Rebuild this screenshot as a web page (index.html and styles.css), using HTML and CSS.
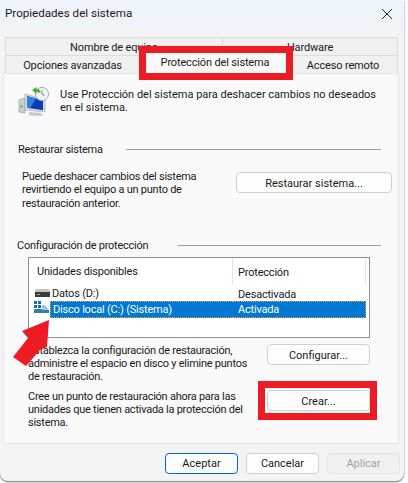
FILE: index.html
```html
<!DOCTYPE html>
<html lang="es">
<head>
  <meta charset="UTF-8" />
  <title>Propiedades del sistema</title>
  <link rel="stylesheet" href="styles.css">
</head>
<body>
  <div class="ventana">
    <div class="titulo">
      <span>Propiedades del sistema</span>
      <svg class="cerrar" width="10" height="10" viewBox="0 0 10 10"><path d="M0 0L10 10M10 0L0 10" stroke="#222" fill="none"/></svg>
    </div>

    <!-- Pestañas -->
    <div class="pestanas">
      <div class="fila">
        <div class="tab tab-equipo">Nombre de equipo</div>
        <div class="tab tab-hardware">Hardware</div>
      </div>
      <div class="fila">
        <div class="tab tab-opciones">Opciones avanzadas</div>
        <div class="tab tab-activa">Protección del sistema</div>
        <div class="tab tab-remoto">Acceso remoto</div>
      </div>
    </div>

    <div class="panel">
      <div class="intro">
        <svg class="icono-sistema" width="32" height="32" viewBox="0 0 32 32">
          <path d="M1 14l6-2v15l-6-1z" fill="#c9ced2" stroke="#8f979c" stroke-width=".6"/>
          <rect x="2.5" y="19" width="2" height="3" fill="#6fbf3a"/>
          <path d="M7 8l20 5v13L7 24z" fill="#d8dde2" stroke="#9aa3a9" stroke-width=".6"/>
          <path d="M9 10l16 4.2v10L9 21.8z" fill="#0a3cb4"/>
          <path d="M9 10l9 2.4-6 10L9 21.8z" fill="#2f7fe0"/>
          <path d="M11 26l12 1 2 3-14-.5z" fill="#c5cacf"/>
          <circle cx="24" cy="8" r="6.6" fill="#eef2f6" stroke="#a4adb5"/>
          <path d="M24 4.5V8l2.5 1.5" stroke="#6d7a86" fill="none"/>
          <path d="M14 4l4.500-3v2c3 0 4 1.500 4 3l-2.500 1c0-1-.5-1.500-1.500-1.500V8z" fill="#4aa82e"/>
        </svg>
        <p>Use Protección del sistema para deshacer cambios no deseados<br>en el sistema.</p>
      </div>

      <div class="cabecera cabecera-restaurar"><span>Restaurar sistema</span><i></i></div>
      <div class="bloque bloque-restaurar">
        <p>Puede deshacer cambios del sistema<br>revirtiendo el equipo a un punto de<br>restauración anterior.</p>
        <button class="btn btn-restaurar">Restaurar sistema...</button>
      </div>

      <div class="cabecera cabecera-config"><span>Configuración de protección</span><i></i></div>
      <div class="lista">
        <div class="lista-head">
          <div class="col-unidad">Unidades disponibles</div>
          <div class="col-prot">Protección</div>
        </div>
        <div class="lista-fila">
          <div class="col-unidad">
            <svg class="icono-disco" width="15" height="8" viewBox="0 0 15 8">
              <path d="M2 0h11l2 3v5H0V3z" fill="#3c3c3c"/>
              <path d="M2 0h11l2 3H0z" fill="#c4c4c4"/>
              <rect x="2" y="5" width="3" height="1" fill="#5fd14a"/>
            </svg>
            <span class="nombre">Datos (D:)</span>
          </div>
          <div class="col-prot">Desactivada</div>
        </div>
        <div class="lista-fila">
          <div class="col-unidad">
            <svg class="icono-disco-c" width="15" height="12" viewBox="0 0 15 12">
              <path d="M0 0h3v3H0zM4 0h3v3H4zM0 4h3v3H0zM4 4h3v3H4z" fill="#0a6fd0"/>
              <path d="M1 8h10l4 1v3H0V9z" fill="#2d7ea8"/>
              <path d="M8 4h3l4 5H8z" fill="#9cc6dd"/>
            </svg>
            <span class="nombre sel-nombre">Disco local (C:) (Sistema)</span>
          </div>
          <div class="col-prot sel-prot">Activada</div>
        </div>
      </div>

      <div class="bloque bloque-config">
        <p>Establezca la configuración de restauración,<br>administre el espacio en disco y elimine puntos<br>de restauración.</p>
        <button class="btn btn-corto">Configurar...</button>
      </div>
      <div class="bloque bloque-crear">
        <p>Cree un punto de restauración ahora para las<br>unidades que tienen activada la protección del<br>sistema.</p>
        <button class="btn btn-corto">Crear...</button>
      </div>
    </div>

    <div class="pie">
      <button class="btn btn-pie btn-aceptar">Aceptar</button>
      <button class="btn btn-pie">Cancelar</button>
      <button class="btn btn-pie btn-off">Aplicar</button>
    </div>
  </div>

  <!-- Marcas rojas sobre la captura -->
  <div class="marca marca-tab"></div>
  <div class="marca marca-crear"></div>
  <svg class="flecha" width="40" height="50" viewBox="0 0 40 50"><polygon points="39,0 12,11 18,18 3,37 16,46 30,30 37,27" fill="#ed1c24"/></svg>
</body>
</html>
```

FILE: styles.css
```css
* {
  box-sizing: border-box;
}
body {
  margin: 0;
  width: 408px;
  height: 483px;
  overflow: hidden;
  position: relative;
  background: #fff;
  font-family: Roboto, sans-serif;
  font-size: 11px;
  line-height: 13.33px;
  color: #1a1a1a;
}
p {
  margin: 0;
  white-space: nowrap;
}
.ventana {
  width: 404px;
  height: 481px;
  background: #f3f3f3;
  border-radius: 0 0 8px 8px;
  box-shadow: 0 1px 2px rgba(0, 0, 0, 0.6);
}
.titulo {
  height: 28px;
  background: #eff4fb;
  display: flex;
  align-items: center;
  justify-content: space-between;
  padding: 0 12px 0 5px;
  font-size: 11.6px;
}
.pestanas {
  padding: 9px 6px 0 5px;
}
.fila {
  display: flex;
  align-items: flex-end;
}
.tab {
  height: 18px;
  background: #f0f0f0;
  border: 1px solid #dcdcdc;
  border-bottom: none;
  text-align: center;
  line-height: 19px;
  margin-left: -1px;
  letter-spacing: -0.15px;
}
.tab:first-child {
  margin-left: 0;
}
.tab-equipo {
  width: 218px;
}
.tab-hardware {
  flex: 1;
}
.tab-opciones {
  width: 135px;
}
.tab-activa {
  width: 150px;
  height: 21px;
  margin-top: -3px;
  background: #f9f9f9;
  line-height: 20px;
  padding-left: 2px;
}
.tab-remoto {
  flex: 1;
}
.panel {
  margin: 0 5px 0 3px;
  height: 371px;
  background: #f9f9f9;
  border: 1px solid #e5e5e5;
  padding: 12px 6px 0 14px;
}
.intro {
  display: flex;
  height: 32px;
}
.intro p {
  padding-top: 2px;
}
.icono-sistema {
  flex-shrink: 0;
  margin-right: 10px;
}
.cabecera {
  display: flex;
  align-items: center;
  margin-right: 11px;
  letter-spacing: -0.25px;
}
.cabecera i {
  flex: 1;
  height: 1px;
  background: #a0a0a0;
  margin-left: 23px;
}
.cabecera-restaurar {
  margin-top: 25px;
}
.cabecera-config {
  margin-top: 29px;
  margin-left: -1px;
}
.cabecera-config i {
  margin-left: 30px;
}
.bloque {
  display: flex;
  justify-content: space-between;
  align-items: flex-start;
  letter-spacing: -0.25px;
}
.bloque-restaurar {
  margin-top: 13.6px;
  padding-left: 4px;
}
.bloque-config {
  margin: 6.3px 22px 0 10px;
}
.bloque-crear {
  margin: 6px 22px 0 10px;
}
.btn {
  font: inherit;
  color: inherit;
  height: 21px;
  background: #fdfdfd;
  border: 1px solid #d0d0d0;
  border-radius: 4px;
  padding: 0;
  line-height: 18px;
  flex-shrink: 0;
}
.btn-restaurar {
  width: 156px;
  margin-top: 2px;
  padding-top: 2px;
}
.btn-corto {
  width: 103px;
  padding-top: 2px;
}
.lista {
  margin: 4.3px 22px 0 10px;
  height: 81px;
  background: #fff;
  border: 1px solid #8f8f8f;
  letter-spacing: -0.2px;
}
.lista-head {
  display: flex;
  height: 26px;
  line-height: 29px;
}
.lista-head .col-unidad {
  padding: 2px 0 0 8px;
  border-right: 1px solid #e5e5e5;
}
.lista-head .col-prot {
  width: 133px;
  border-right: 1px solid #e5e5e5;
}
.lista-fila {
  display: flex;
  height: 17px;
  line-height: 21px;
}
.col-unidad {
  width: 204px;
  display: flex;
  align-items: center;
}
.col-prot {
  padding-left: 5px;
  width: 133px;
}
.icono-disco {
  margin: 2px 0 0 6px;
}
.icono-disco-c {
  margin: -5px 0 0 5px;
}
.nombre {
  margin-left: 2px;
  padding-top: 3px;
}
.sel-nombre,
.sel-prot {
  height: 17px;
  background: #0078d4;
  color: #fff;
  border-top: 1px dotted #f0a040;
  border-bottom: 1px dotted #f0a040;
  line-height: 15px;
}
.sel-nombre {
  flex: 1;
  margin-left: 1px;
  padding: 0 0 0 2px;
  border-left: 1px dotted #f0a040;
}
.sel-prot {
  border-right: 1px dotted #f0a040;
}
.pie {
  display: flex;
  justify-content: flex-end;
  gap: 8px;
  padding: 9px 4px 0 0;
}
.btn-pie {
  width: 73px;
}
.btn-aceptar {
  border-color: #0067c0;
}
.btn-off {
  background: #f0f0f0;
  border-color: #e5e5e5;
  color: #a0a0a0;
}
.marca {
  position: absolute;
  border: 7px solid #ed1c24;
}
.marca-tab {
  left: 139px;
  top: 46px;
  width: 154px;
  height: 34px;
}
.marca-crear {
  left: 258px;
  top: 381px;
  width: 119px;
  height: 39px;
}
.flecha {
  position: absolute;
  left: 10px;
  top: 320px;
}
```
